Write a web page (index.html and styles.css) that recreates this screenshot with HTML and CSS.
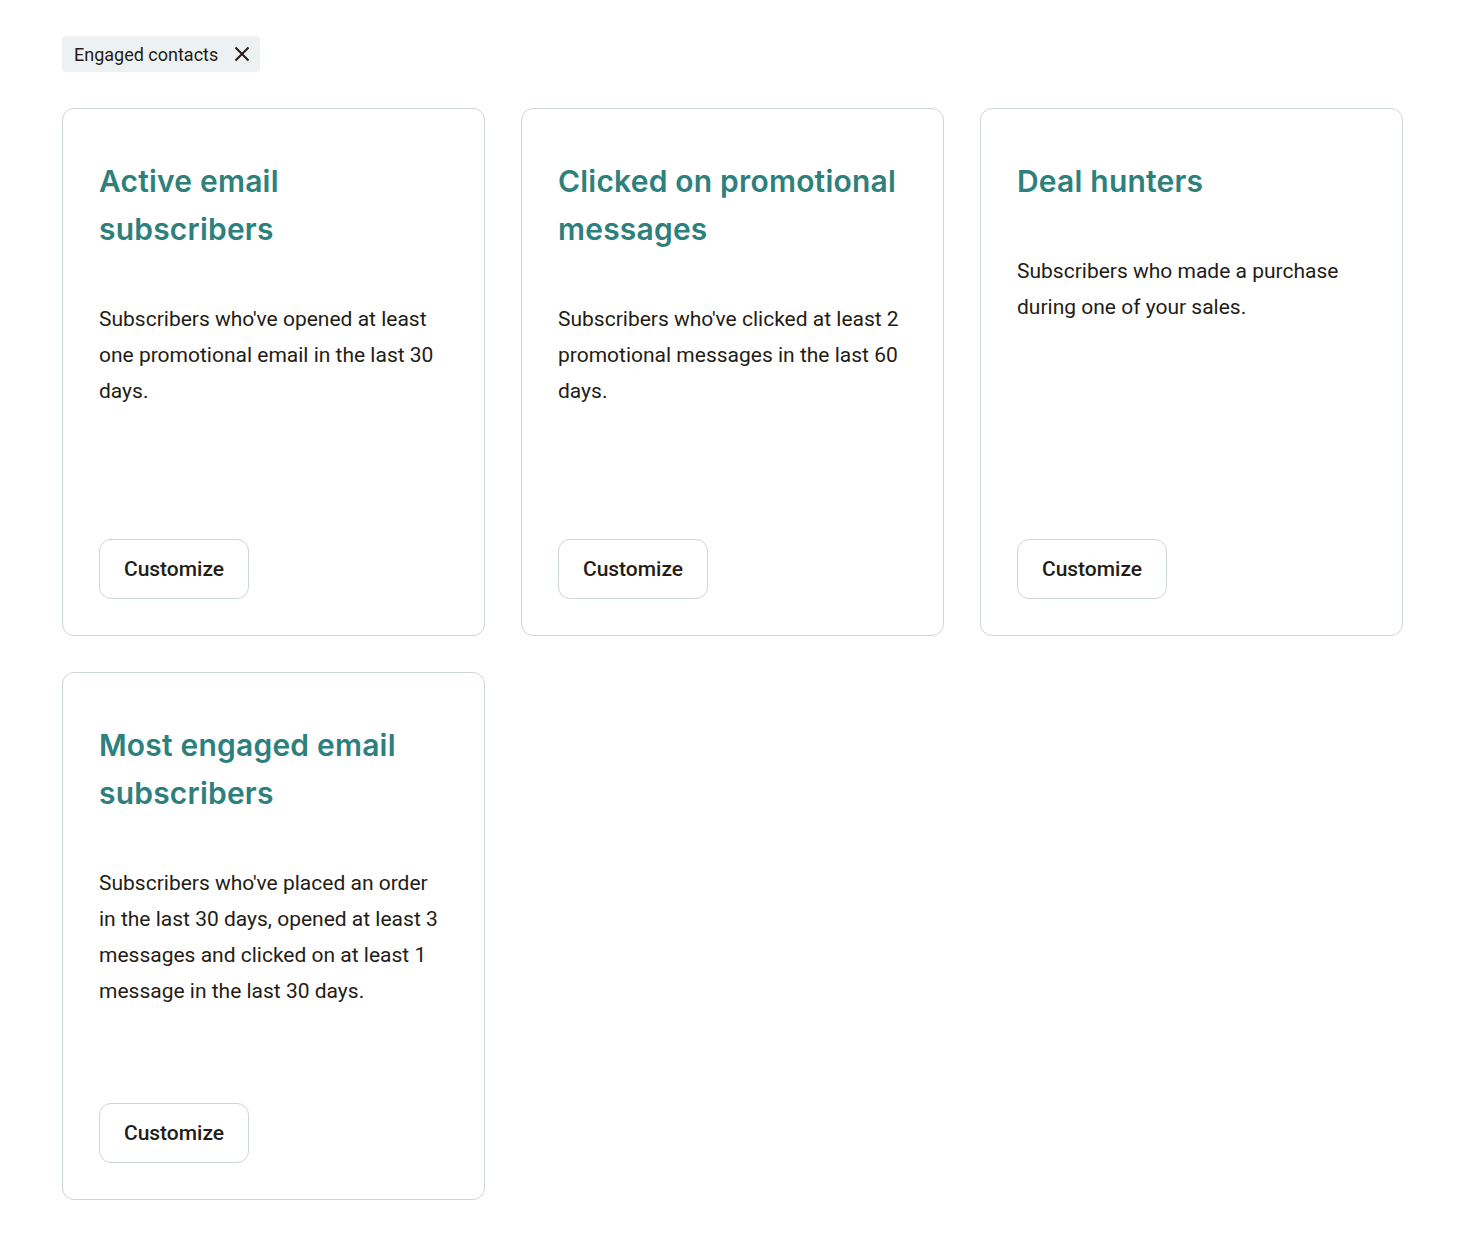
FILE: index.html
```html
<!DOCTYPE html>
<html lang="en">
<head>
    <meta charset="UTF-8">
    <title>Engaged contacts</title>
    <link rel="stylesheet" href="styles.css">
</head>
<body>
<div class="page">
    <div class="filters">
        <span class="chip">
            Engaged contacts
            <button class="chip-close" aria-label="Remove filter">
                <svg width="16" height="16" viewBox="0 0 16 16">
                    <path d="M1.5 1.5 L14.5 14.5 M14.5 1.5 L1.5 14.5" stroke="#241c15" stroke-width="2" fill="none"/>
                </svg>
            </button>
        </span>
    </div>

    <div class="cards">
        <div class="card">
            <h2 class="card-title">Active email subscribers</h2>
            <p class="card-text">Subscribers who've opened at least one promotional email in the last 30 days.</p>
            <button class="card-button">Customize</button>
        </div>
        <div class="card">
            <h2 class="card-title">Clicked on promotional messages</h2>
            <p class="card-text">Subscribers who've clicked at least 2 promotional messages in the last 60 days.</p>
            <button class="card-button">Customize</button>
        </div>
        <div class="card">
            <h2 class="card-title">Deal hunters</h2>
            <p class="card-text">Subscribers who made a purchase during one of your sales.</p>
            <button class="card-button">Customize</button>
        </div>
        <div class="card">
            <h2 class="card-title">Most engaged email subscribers</h2>
            <p class="card-text">Subscribers who've placed an order in the last 30 days, opened at least 3 messages and clicked on at least 1 message in the last 30 days.</p>
            <button class="card-button">Customize</button>
        </div>
    </div>
</div>
</body>
</html>
```

FILE: styles.css
```css
body {
    margin: 0;
    background: #fff;
    color: #241c15;
    font-family: Roboto, "Liberation Sans", sans-serif;
}

.page {
    padding: 36px 62px;
}

.filters {
    display: flex;
    margin-bottom: 36px;
}

.chip {
    display: flex;
    align-items: center;
    gap: 16px;
    height: 36px;
    padding: 0 10px 0 12px;
    background: #edf1f1;
    border-radius: 4px;
    font-size: 18px;
    color: #241c15;
}

.chip-close {
    display: flex;
    padding: 0;
    border: 0;
    background: none;
    cursor: pointer;
}

.cards {
    display: grid;
    grid-template-columns: repeat(3, 423px);
    gap: 36px;
}

.card {
    display: flex;
    flex-direction: column;
    align-items: flex-start;
    box-sizing: border-box;
    min-height: 528px;
    padding: 48px 36px 36px;
    border: 1px solid #cdd5d5;
    border-radius: 12px;
}

.card-title {
    margin: 0 0 48px;
    font-family: Inter, "Open Sans", sans-serif;
    font-weight: 600;
    font-size: 30px;
    line-height: 48px;
    color: #2e807d;
    letter-spacing: 0.2px;
}

.card-text {
    margin: 0;
    font-size: 21px;
    line-height: 36px;
}

.card-button {
    margin-top: auto;
    width: 150px;
    height: 60px;
    background: #fff;
    border: 1px solid #cdd5d5;
    border-radius: 12px;
    font-family: Roboto, "Liberation Sans", sans-serif;
    font-weight: 500;
    font-size: 21px;
    color: #241c15;
    cursor: pointer;
}
```
